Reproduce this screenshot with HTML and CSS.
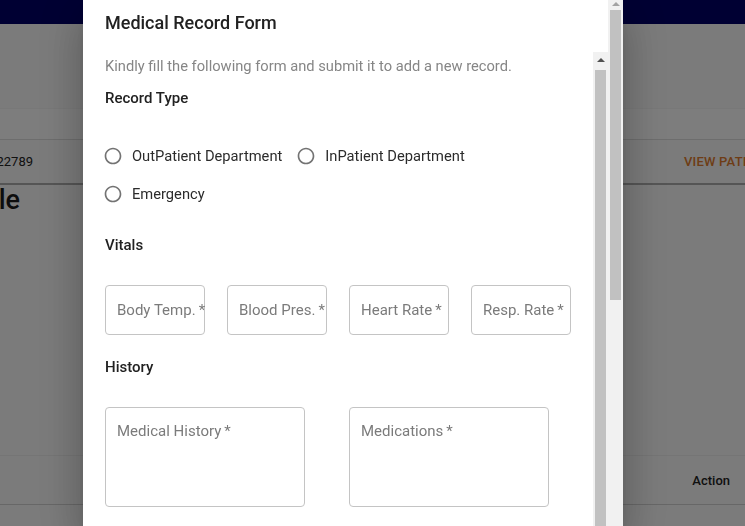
FILE: index.html
```html
<!DOCTYPE html>
<html lang="en">
<head>
<meta charset="utf-8">
<title>Medical Record Form</title>
<link rel="stylesheet" href="styles.css">
</head>
<body>
<div class="app">
  <header class="topbar"></header>
  <div class="band"></div>
  <div class="tabs"></div>
  <div class="info-row">
    <div class="clip-left id-box"><span class="pid">Patient ID: PT-0022789</span></div>
    <div class="action-link"><span>VIEW PATIENT HISTORY</span></div>
  </div>
  <div class="page-heading">
    <div class="clip-left head-box"><h1 class="page-title">Patient Profile</h1></div>
  </div>
  <div class="spacer"></div>
  <div class="thead"><span class="th">Action</span></div>
  <div class="trow"></div>
</div>

<div class="backdrop"></div>

<div class="dialog-container">
  <div class="paper">
    <div class="paper-main">
      <h2 class="dialog-title">Medical Record Form</h2>
      <div class="dialog-body">
        <div class="dialog-content">
          <p class="intro">Kindly fill the following form and submit it to add a new record.</p>

          <h3 class="section-title first">Record Type</h3>
          <div class="radio-group">
            <label class="radio-label">
              <span class="radio"><svg viewBox="0 0 24 24" width="20" height="20"><path d="M12 2C6.48 2 2 6.48 2 12s4.48 10 10 10 10-4.48 10-10S17.52 2 12 2zm0 18c-4.42 0-8-3.58-8-8s3.58-8 8-8 8 3.58 8 8-3.58 8-8 8z"/></svg></span>
              <span class="radio-text">OutPatient Department</span>
            </label>
            <label class="radio-label">
              <span class="radio"><svg viewBox="0 0 24 24" width="20" height="20"><path d="M12 2C6.48 2 2 6.48 2 12s4.48 10 10 10 10-4.48 10-10S17.52 2 12 2zm0 18c-4.42 0-8-3.58-8-8s3.58-8 8-8 8 3.58 8 8-3.58 8-8 8z"/></svg></span>
              <span class="radio-text">InPatient Department</span>
            </label>
            <label class="radio-label">
              <span class="radio"><svg viewBox="0 0 24 24" width="20" height="20"><path d="M12 2C6.48 2 2 6.48 2 12s4.48 10 10 10 10-4.48 10-10S17.52 2 12 2zm0 18c-4.42 0-8-3.58-8-8s3.58-8 8-8 8 3.58 8 8-3.58 8-8 8z"/></svg></span>
              <span class="radio-text">Emergency</span>
            </label>
          </div>

          <h3 class="section-title">Vitals</h3>
          <div class="vitals">
            <div class="field"><span class="field-label">Body Temp.&thinsp;*</span></div>
            <div class="field"><span class="field-label">Blood Pres.&thinsp;*</span></div>
            <div class="field"><span class="field-label">Heart Rate&thinsp;*</span></div>
            <div class="field"><span class="field-label">Resp. Rate&thinsp;*</span></div>
          </div>

          <h3 class="section-title">History</h3>
          <div class="history">
            <div class="field area"><span class="field-label">Medical History&thinsp;*</span></div>
            <div class="field area"><span class="field-label">Medications&thinsp;*</span></div>
          </div>
        </div>
        <div class="scrollbar inner">
          <div class="sb-btn"><span class="arrow dark"></span></div>
          <div class="sb-thumb"></div>
          <div class="sb-track"></div>
        </div>
      </div>
    </div>
    <div class="scrollbar outer">
      <div class="sb-btn"><span class="arrow light"></span></div>
      <div class="sb-thumb"></div>
      <div class="sb-track"></div>
    </div>
  </div>
</div>
</body>
</html>
```

FILE: styles.css
```css
* { box-sizing: border-box; }
html, body { margin: 0; padding: 0; }
body {
  width: 745px;
  height: 526px;
  overflow: hidden;
  position: relative;
  font-family: Roboto, "Liberation Sans", Arial, sans-serif;
  background: #f6f6f6;
}

/* ---------- background page ---------- */
.app {
  display: flex;
  flex-direction: column;
  height: 526px;
}
.topbar { flex: none; height: 24px; background: #000066; }
.band { flex: none; height: 84px; background: #f6f6f6; }
.tabs {
  flex: none;
  height: 32px;
  background: #fbfbfb;
  border-top: 1px solid #f1f1f1;
  border-bottom: 1px solid #dadada;
}
.info-row {
  flex: none;
  height: 45px;
  display: flex;
  justify-content: space-between;
  align-items: center;
  border-bottom: 2px solid #ababab;
  padding-bottom: 1px;
}
.clip-left {
  display: flex;
  justify-content: flex-end;
  white-space: nowrap;
}
.id-box { width: 33px; }
.pid { font-size: 13px; color: #222; }
.action-link {
  width: 61px;
  white-space: nowrap;
  font-size: 13px;
  font-weight: 500;
  color: #dd7a2c;
  letter-spacing: 0.2px;
}
.page-heading { flex: none; height: 30px; display: flex; align-items: center; }
.head-box { width: 20px; }
.page-title {
  margin: 0;
  font-size: 27px;
  font-weight: 500;
  line-height: 30px;
  color: #1a1a1a;
}
.spacer { flex: 1; }
.thead {
  flex: none;
  height: 50px;
  display: flex;
  justify-content: flex-end;
  align-items: center;
  padding-right: 15px;
  border-top: 1px solid #eaeaea;
  border-bottom: 1px solid #cfcfcf;
}
.th { font-size: 13px; font-weight: 500; color: #222; }
.trow { flex: none; height: 21px; }

/* ---------- backdrop & dialog ---------- */
.backdrop {
  position: fixed;
  inset: 0;
  background: rgba(0, 0, 0, 0.5);
}
.dialog-container {
  position: fixed;
  inset: 0;
  display: flex;
  padding-left: 83px;
}
.paper {
  width: 540px;
  height: 526px;
  background: #fff;
  display: flex;
  box-shadow: 0 11px 15px -7px rgba(0,0,0,0.2), 0 24px 38px 3px rgba(0,0,0,0.14), 0 9px 46px 8px rgba(0,0,0,0.12);
}
.paper-main {
  flex: 1;
  display: flex;
  flex-direction: column;
  min-width: 0;
}
.dialog-title {
  margin: 0;
  padding: 11px 22px 17px;
  font-size: 18px;
  font-weight: 500;
  line-height: 24px;
  color: #212121;
}
.dialog-body {
  flex: 1;
  display: flex;
  min-height: 0;
}
.dialog-content {
  flex: 1;
  padding: 0 22px;
  overflow: hidden;
}
.intro {
  margin: 0;
  padding-top: 2px;
  font-size: 14.7px;
  line-height: 24px;
  color: #868686;
}
.section-title {
  margin: 20px 0 0;
  font-size: 15px;
  font-weight: 500;
  line-height: 24px;
  color: #212121;
}
.section-title.first { margin-top: 8px; }

.radio-group {
  margin-top: 27px;
  display: flex;
  flex-wrap: wrap;
}
.radio-label {
  display: inline-flex;
  align-items: center;
  margin-left: -11px;
  margin-right: 16px;
}
.radio {
  display: flex;
  padding: 9px;
}
.radio svg { display: block; fill: #737373; }
.radio-text {
  font-size: 14.7px;
  line-height: 24px;
  color: #2b2b2b;
}

.vitals {
  margin-top: 28px;
  display: grid;
  grid-template-columns: repeat(4, 100px);
  column-gap: 22px;
}
.field {
  height: 50px;
  border: 1px solid #c4c4c4;
  border-radius: 4px;
  padding-left: 11px;
  padding-bottom: 1px;
  display: flex;
  align-items: center;
}
.field-label {
  font-size: 15px;
  line-height: 24px;
  color: #7b7b7b;
  white-space: nowrap;
}
.history {
  margin-top: 28px;
  display: flex;
  gap: 44px;
}
.field.area {
  width: 200px;
  height: 100px;
  align-items: flex-start;
  padding-top: 11px;
}
.section-title + .vitals, .section-title + .history { margin-top: 28px; }
.vitals + .section-title { margin-top: 20px; }

/* ---------- scrollbars ---------- */
.scrollbar {
  flex: none;
  width: 15px;
  background: #f1f1f1;
  display: flex;
  flex-direction: column;
  align-items: center;
}
.sb-btn {
  flex: none;
  width: 15px;
  display: flex;
  justify-content: center;
  align-items: center;
}
.arrow {
  width: 0;
  height: 0;
  border-left: 4px solid transparent;
  border-right: 4px solid transparent;
  border-bottom: 4px solid #505050;
}
.arrow.light { border-bottom-color: #a3a3a3; }
.inner .sb-btn { height: 16px; margin-bottom: 2px; }
.outer .sb-btn { height: 8px; margin-bottom: 2px; }
.sb-thumb {
  flex: none;
  width: 11px;
  background: #c1c1c1;
}
.inner .sb-thumb { flex: 1; }
.outer .sb-thumb { height: 290px; }
.sb-track { flex: 1; }
.inner .sb-track { flex: none; height: 0; }
```
